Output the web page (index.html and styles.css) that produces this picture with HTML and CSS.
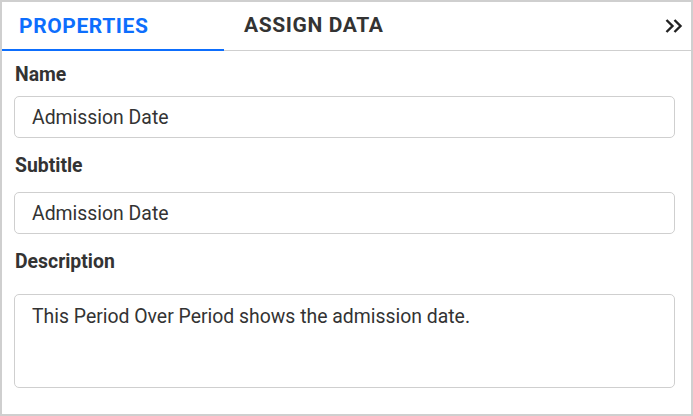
FILE: index.html
```html
<!DOCTYPE html>
<html>
<head>
<meta charset="utf-8">
<link rel="stylesheet" href="styles.css">
</head>
<body>
<div class="panel">
  <div class="tabs">
    <div class="tab active">PROPERTIES</div>
    <div class="tab second">ASSIGN DATA</div>
    <div class="collapse">
      <svg width="18" height="14" viewBox="0 0 18 14"><path d="M1.5 1 L7.5 7 L1.5 13 M9.5 1 L15.5 7 L9.5 13" fill="none" stroke="#222" stroke-width="2.4"/></svg>
    </div>
  </div>
  <div class="body">
    <div class="label first">Name</div>
    <div class="field">Admission Date</div>
    <div class="label">Subtitle</div>
    <div class="field">Admission Date</div>
    <div class="label desc">Description</div>
    <div class="field area">This Period Over Period shows the admission date.</div>
  </div>
</div>
</body>
</html>
```
FILE: styles.css
```css
html, body { margin: 0; padding: 0; background: #fff; }
body { font-family: Roboto, "Liberation Sans", sans-serif; color: #333; }
.panel {
  width: 693px; height: 416px; box-sizing: border-box;
  border: 2px solid #cfcfcf; background: #fff;
}
.tabs {
  display: flex; align-items: stretch; height: 48px;
  border-bottom: 1px solid #cfcfcf;
}
.tab {
  font-size: 21px; font-weight: 700; letter-spacing: 0.6px;
  color: #333; display: flex; align-items: center;
  padding-left: 17px; box-sizing: border-box; padding-bottom: 2px;
}
.tab.active {
  width: 222px; color: #0d6efd;
  border-bottom: 2px solid #0d6efd; margin-bottom: -1px; padding-bottom: 0;
}
.tab.second { padding-left: 20px; }
.collapse { margin-left: auto; margin-right: 8px; display: flex; align-items: center; padding-bottom: 1px; }
.collapse svg { display: block; }
.body { padding: 0 16px 0 12px; }
.label {
  font-size: 19.4px; font-weight: 700; line-height: 24px;
  margin: 16px 0 14px 1px;
}
.label.first { margin-top: 12px; margin-bottom: 9px; }
.label.desc { margin-top: 16px; margin-bottom: 20px; }
.field {
  height: 40px; border: 1px solid #cfcfcf; border-radius: 5px;
  font-size: 19.4px; line-height: 42px; padding-left: 17px;
}
.field.area { line-height: 24px; padding-top: 10px; height: 82px; }
```
